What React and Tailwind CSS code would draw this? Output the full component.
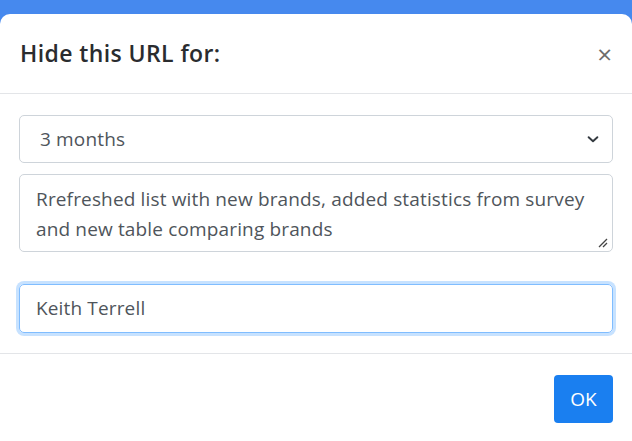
export default function App() {
  return (
    <div className="h-[441px] w-[632px] bg-[#4689ee] pt-[14px] font-['Open_Sans',sans-serif]">
      <div className="flex h-full flex-col rounded-t-[10px] bg-white">
        <div className="flex h-[80px] items-center justify-between border-b border-[#e3e5e8] pl-[20px] pr-[20px]">
          <h2 className="text-[23px] font-semibold tracking-[0.4px] text-[#2a2c2f]">Hide this URL for:</h2>
          <button className="text-[26px] leading-none text-[#6c6c6c]" aria-label="Close">
            ×
          </button>
        </div>
        <div className="flex flex-col gap-[11px] px-[19px] pt-[21px]">
          <div className="flex h-[48px] items-center justify-between rounded-[5px] border border-[#ced4da] pl-[20px] pr-[12px]">
            <span className="text-[19px] tracking-[0.15px] text-[#4f555b]">3 months</span>
            <svg width="14" height="14" viewBox="0 0 16 16" fill="none" stroke="#343a40" strokeWidth="2.2" strokeLinecap="round" strokeLinejoin="round">
              <path d="M3 6l5 4.5L13 6" />
            </svg>
          </div>
          <div className="relative h-[78px] rounded-[5px] border border-[#ced4da] px-[16px] pt-[9px] text-[19px] leading-[30px] tracking-[0.15px] text-[#4f555b]">
            Rrefreshed list with new brands, added statistics from survey and new table comparing brands
            <svg className="absolute bottom-[3px] right-[4px]" width="11" height="11" viewBox="0 0 11 11" stroke="#444" strokeWidth="1.3">
              <path d="M2 10L10 2M6 10L10 6" />
            </svg>
          </div>
          <div className="mt-[21px] flex h-[49px] items-center rounded-[5px] border border-[#80bdff] px-[16px] text-[19px] tracking-[0.15px] text-[#4f555b] shadow-[0_0_0_3px_rgba(0,123,255,0.22)]">
            Keith Terrell
          </div>
        </div>
        <div className="mt-[20px] flex justify-end border-t border-[#e3e5e8] px-[19px] pt-[21px]">
          <button className="h-[48px] w-[59px] rounded-[4px] bg-[#1a7ff0] text-[19px] text-white">OK</button>
        </div>
      </div>
    </div>
  );
}
